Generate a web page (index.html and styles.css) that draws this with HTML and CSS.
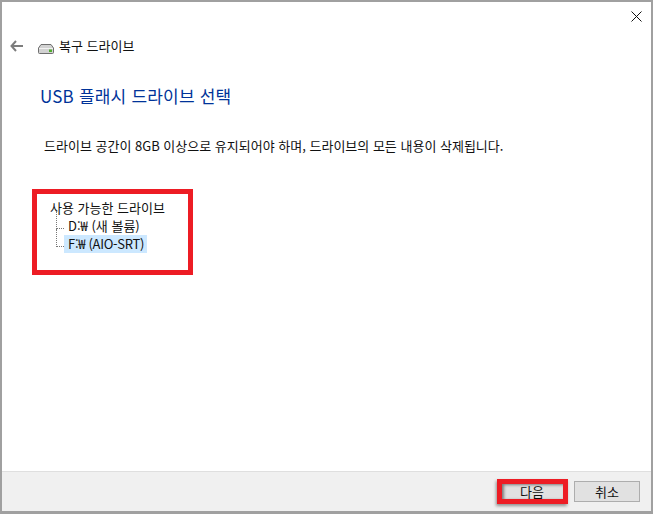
FILE: index.html
```html
<!DOCTYPE html>
<html lang="ko">
<head>
<meta charset="utf-8">
<title>복구 드라이브</title>
<link rel="stylesheet" href="styles.css">
</head>
<body>
<div class="window">
  <button class="close" aria-label="닫기">
    <svg width="11" height="11" viewBox="0 0 11 11"><path d="M.5.5l10 10M10.500.5l-10 10" stroke="#111" stroke-width="1" fill="none"/></svg>
  </button>
  <div class="main">
    <header class="nav">
      <svg class="back" width="13" height="12" viewBox="0 0 13 12"><path d="M6 1L1.500 6 6 11M2 6h11" stroke="#7d7d7d" stroke-width="2" fill="none"/></svg>
      <svg class="drive" width="16" height="10" viewBox="0 0 16 10">
        <path d="M3 .5h10l2.500 3.500v4.500a1 1 0 0 1-1 1h-13a1 1 0 0 1-1-1V4z" fill="#d2d2d2" stroke="#6f6f6f"/>
        <path d="M1 4.500h14" stroke="#f2f2f2"/>
        <rect x="11" y="5.500" width="3" height="2.500" fill="#4fae2c"/>
      </svg>
      <span class="nav-title">복구 드라이브</span>
    </header>
    <h1 class="heading">USB 플래시 드라이브 선택</h1>
    <p class="note">드라이브 공간이 8GB 이상으로 유지되어야 하며, 드라이브의 모든 내용이 삭제됩니다.</p>
    <div class="tree">
      <div class="tree-root">사용 가능한 드라이브</div>
      <div class="tree-item"><span class="dots"></span><span class="label">D:₩ (새 볼륨)</span></div>
      <div class="tree-item"><span class="dots"></span><span class="label selected">F:₩ (AIO-SRT)</span></div>
      <div class="mark mark-tree"></div>
    </div>
  </div>
  <footer class="footer">
    <button class="btn primary">다음<span class="mark mark-btn"></span></button>
    <button class="btn">취소</button>
  </footer>
</div>
</body>
</html>
```
FILE: styles.css
```css
* { box-sizing: border-box; }
html, body { margin: 0; height: 100%; }
body { font-family: "Noto Sans CJK KR", "Liberation Sans", sans-serif; color: #111; background: #fff; }
.window {
  position: relative;
  width: 653px;
  height: 514px;
  border: 2px solid #a0a0a0;
  border-bottom-width: 3px;
  display: flex;
  flex-direction: column;
  background: #fff;
}
.close {
  position: absolute;
  top: 9px;
  right: 9px;
  width: 11px;
  height: 11px;
  padding: 0;
  border: 0;
  background: none;
  display: flex;
}
.main { flex: 1; padding: 36px 0 0 0; }
.nav { display: flex; align-items: center; height: 16px; padding-left: 8px; }
.back { margin-right: 15px; }
.drive { margin-right: 5px; margin-top: 5px; }
.nav-title { font-size: 13px; line-height: 16px; }
.heading {
  margin: 32px 0 0 38px;
  font-size: 17px;
  line-height: 20px;
  font-weight: 400;
  letter-spacing: .2px;
  color: #003399;
}
.note { margin: 32px 0 0 42px; font-size: 13px; line-height: 16px; }
.tree { position: relative; margin: 45px 0 0 48px; font-size: 13px; line-height: 18px; }
.tree-root { height: 18px; }
.tree-item { display: flex; align-items: center; height: 18px; }
.dots { flex: none; align-self: flex-start; width: 8px; height: 18px; margin-left: 6px; margin-top: -6px; border-left: 1px dotted #777; border-bottom: 1px dotted #777; }
.label { padding: 0 3px 0 4px; height: 18px; }
.selected { background: #cce8ff; letter-spacing: -.3px; }
.mark { position: absolute; border: 5px solid #ed1c24; pointer-events: none; }
.mark-tree { left: -18px; top: -10px; width: 161px; height: 86px; }
.footer {
  height: 40px;
  background: #f0f0f0;
  border-top: 1px solid #dfdfdf;
  display: flex;
  justify-content: flex-end;
  align-items: flex-start;
  gap: 9px;
  padding: 9px 11px 0 0;
}
.btn {
  position: relative;
  width: 66px;
  height: 21px;
  padding: 0;
  font: 13px/19px "Noto Sans CJK KR", sans-serif;
  color: #111;
  background: #e1e1e1;
  border: 1px solid #adadad;
}
.mark-btn { left: -3px; top: -3px; width: 71px; height: 25px; box-shadow: -1px 2px 3px rgba(0,0,0,.4), inset 2px 1px 3px rgba(0,0,0,.45); }
```
